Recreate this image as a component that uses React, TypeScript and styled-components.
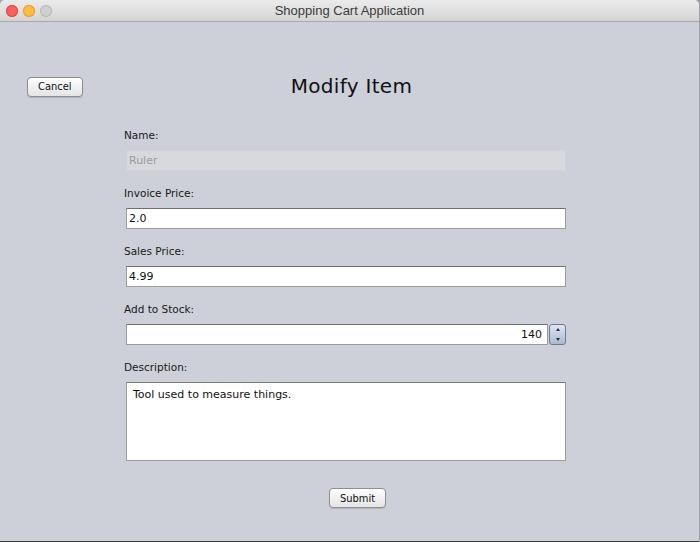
import React from "react";
import styled, { createGlobalStyle } from "styled-components";

const GlobalStyle = createGlobalStyle`
  html, body {
    margin: 0;
    padding: 0;
    background: #9ea1a8;
  }
  body {
    font-family: "DejaVu Sans", "Liberation Sans", sans-serif;
  }
`;

const Window = styled.div`
  width: 699px;
  height: 541px;
  background: #cdd0d8;
  border-radius: 5px 5px 0 0;
  border-bottom: 1px solid #3a3a3a;
  overflow: hidden;
  display: flex;
  flex-direction: column;
`;

const TitleBar = styled.div`
  height: 21px;
  flex: none;
  display: grid;
  grid-template-columns: 70px 1fr 70px;
  align-items: center;
  background: linear-gradient(#ebebeb, #d4d4d4);
  border-bottom: 1px solid #a9a9a9;
`;

const Lights = styled.div`
  display: flex;
  gap: 5px;
  padding-left: 6px;
`;

const Light = styled.span<{ $color: string; $ring: string }>`
  width: 12px;
  height: 12px;
  border-radius: 50%;
  background: ${(p) => p.$color};
  box-shadow: inset 0 0 0 1px ${(p) => p.$ring};
`;

const WindowTitle = styled.div`
  text-align: center;
  font-family: "Liberation Sans", sans-serif;
  font-size: 13px;
  color: #3c3c3c;
`;

const Content = styled.div`
  flex: 1;
  display: flex;
  flex-direction: column;
  padding-top: 52px;
`;

const Header = styled.div`
  display: grid;
  grid-template-columns: 1fr auto 1fr;
  align-items: center;
  height: 22px;
`;

const MacButton = styled.button`
  height: 20px;
  padding: 0 10px;
  font-family: "DejaVu Sans Condensed", "DejaVu Sans", sans-serif;
  font-size: 11px;
  color: #111;
  background: linear-gradient(#ffffff, #f1f1f1 50%, #e4e4e4);
  border: 1px solid #8e8e8e;
  border-radius: 4px;
  box-shadow: 0 1px 1px rgba(0, 0, 0, 0.15);
`;

const CancelCell = styled.div`
  padding-left: 27px;
`;

const Heading = styled.h1`
  margin: 0;
  font-family: "DejaVu Sans", sans-serif;
  font-weight: normal;
  font-size: 20px;
  color: #111;
  letter-spacing: 0.3px;
  padding-left: 4px;
`;

const Form = styled.div`
  margin: 32px 0 0 124px;
  width: 442px;
  display: flex;
  flex-direction: column;
  gap: 15px;
`;

const Group = styled.div`
  display: flex;
  flex-direction: column;
  gap: 8px;
`;

const Label = styled.div`
  height: 14px;
  line-height: 14px;
  font-size: 10.5px;
  color: #1a1a1a;
`;

const Field = styled.div<{ $disabled?: boolean }>`
  height: 19px;
  margin-left: 2px;
  padding: 0 2px;
  display: flex;
  align-items: center;
  font-size: 11px;
  color: ${(p) => (p.$disabled ? "#9a9ca2" : "#111")};
  background: ${(p) => (p.$disabled ? "#d7d9df" : "#fff")};
  border: 1px solid ${(p) => (p.$disabled ? "#d0d2d8" : "#9c9c9c")};
  border-top-color: ${(p) => (p.$disabled ? "#d0d2d8" : "#6f6f6f")};
`;

const SpinnerRow = styled.div`
  display: flex;
  align-items: center;
  margin-left: 2px;
`;

const SpinnerField = styled(Field)`
  flex: 1;
  margin-left: 0;
  justify-content: flex-end;
  padding-right: 5px;
`;

const Stepper = styled.div`
  width: 15px;
  height: 19px;
  margin-left: 1px;
  border: 1px solid #6d7c93;
  border-radius: 3px;
  background: linear-gradient(#dfe6f0, #a9bad1);
  display: flex;
  flex-direction: column;
  align-items: center;
  justify-content: space-around;
`;

const Arrow = styled.span<{ $up?: boolean }>`
  width: 0;
  height: 0;
  border-left: 2.5px solid transparent;
  border-right: 2.5px solid transparent;
  ${(p) =>
    p.$up ? "border-bottom: 3px solid #2b2f38;" : "border-top: 3px solid #2b2f38;"}
`;

const TextArea = styled.div`
  height: 67px;
  margin-left: 2px;
  padding: 5px 6px;
  font-size: 11px;
  color: #111;
  background: #fff;
  border: 1px solid #9c9c9c;
  border-top-color: #7a7a7a;
`;

const Footer = styled.div`
  display: flex;
  justify-content: center;
  margin-top: 27px;
  padding-left: 16px;
`;

export default function App() {
  return (
    <>
      <GlobalStyle />
      <Window>
        <TitleBar>
          <Lights>
            <Light $color="#fc605c" $ring="#df4744" />
            <Light $color="#fdbc40" $ring="#de9f34" />
            <Light $color="#cfcfcf" $ring="#b8b8b8" />
          </Lights>
          <WindowTitle>Shopping Cart Application</WindowTitle>
          <span />
        </TitleBar>
        <Content>
          <Header>
            <CancelCell>
              <MacButton>Cancel</MacButton>
            </CancelCell>
            <Heading>Modify Item</Heading>
            <span />
          </Header>
          <Form>
            <Group>
              <Label>Name:</Label>
              <Field $disabled>Ruler</Field>
            </Group>
            <Group>
              <Label>Invoice Price:</Label>
              <Field>2.0</Field>
            </Group>
            <Group>
              <Label>Sales Price:</Label>
              <Field>4.99</Field>
            </Group>
            <Group>
              <Label>Add to Stock:</Label>
              <SpinnerRow>
                <SpinnerField>140</SpinnerField>
                <Stepper>
                  <Arrow $up />
                  <Arrow />
                </Stepper>
              </SpinnerRow>
            </Group>
            <Group>
              <Label>Description:</Label>
              <TextArea>Tool used to measure things.</TextArea>
            </Group>
          </Form>
          <Footer>
            <MacButton>Submit</MacButton>
          </Footer>
        </Content>
      </Window>
    </>
  );
}
